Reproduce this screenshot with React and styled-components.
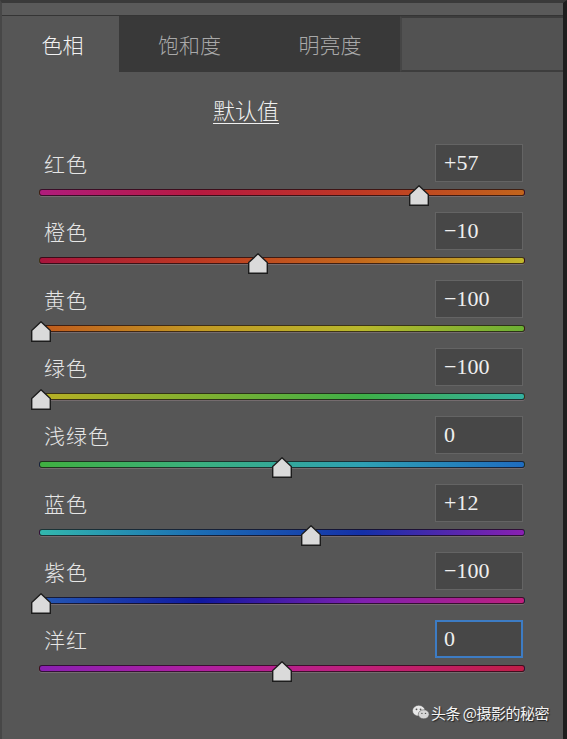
import React from 'react'
import styled, { createGlobalStyle } from 'styled-components'

const GlobalStyle = createGlobalStyle`
   html, body{
      margin: 0;
      padding: 0;
      background: #555555;
   }
`;

const CJK = `"Noto Sans CJK SC", "Noto Sans", sans-serif`;

const Frame = styled.div`
   width: 567px;
   height: 739px;
   box-sizing: border-box;
   overflow: hidden;
   background: #565656;
   border-top: 3px solid #3a3a3a;
   border-left: 2px solid #474747;
   border-right: 4px solid #1e1e1e;
   padding-left: 4px;
   display: flex;
   flex-direction: column;
   font-family: ${CJK};
   font-weight: 300;
`;

const TopStrip = styled.div`
   height: 12px;
   background: #5a5a5a;
   border-bottom: 1px solid #353535;
   margin-left: -4px;
`;

const TabBar = styled.div`
   display: flex;
   height: 56px;
`;

const Tab = styled.div`
   width: ${p => p.$w}px;
   display: flex;
   align-items: center;
   justify-content: center;
   font-size: 21px;
   color: ${p => p.$active ? '#f2f2f2' : '#a9a9a9'};
   background: ${p => p.$active ? '#565656' : '#393939'};
`;

const TabFiller = styled.div`
   flex: 1;
   background: #525252;
   border-top: 2px solid #3d3d3d;
   border-bottom: 2px solid #3d3d3d;
   border-left: 2px solid #464646;
`;

const DefaultRow = styled.div`
   height: 72px;
   box-sizing: border-box;
   padding: 25px 0 0 207px;

   span{
      font-size: 22px;
      line-height: 24px;
      color: #f0f0f0;
      text-decoration: underline;
      text-underline-offset: 4px;
      text-decoration-thickness: 1px;
   }
`;

const Rows = styled.ul`
   list-style: none;
   margin: 0 0 0 33px;
   padding: 0;
   width: 486px;
`;

const Row = styled.li`
   margin-bottom: 16px;
`;

const Header = styled.div`
   display: flex;
   align-items: center;
   justify-content: space-between;
   height: 38px;
`;

const Label = styled.span`
   padding-left: 5px;
   font-size: 21px;
   color: #e6e6e6;
   letter-spacing: 1px;
`;

const ValueBox = styled.div`
   width: 88px;
   height: 38px;
   margin-right: 2px;
   box-sizing: border-box;
   display: flex;
   align-items: center;
   padding-left: ${p => p.$focus ? 7 : 8}px;
   background: #474747;
   border: ${p => p.$focus ? '2px solid #3d7cc4' : '1px solid #646464'};
   font-family: "Liberation Serif", serif;
   font-weight: 400;
   font-size: 22px;
   color: #efefef;
`;

const Track = styled.div`
   position: relative;
   margin-top: 7px;
   height: 7px;
   box-sizing: border-box;
   border-radius: 3px;
   border: 1px solid rgba(20, 10, 15, 0.75);
   background: ${p => p.$gradient};
   box-shadow: 0 1px 0 rgba(210, 170, 185, 0.25);
`;

const Thumb = styled.svg`
   position: absolute;
   top: -5px;
   width: 20px;
   height: 21px;
`;

const Footer = styled.div`
   display: flex;
   justify-content: flex-end;
   align-items: center;
   gap: 1px;
   padding: 14px 14px 0 0;
   font-size: 15px;
   font-weight: 400;
   letter-spacing: -0.5px;
   color: #f4f4f4;
   text-shadow: 1px 1px 1px #222;
`;

const hues = [
   { name: '红色', value: 57, colors: ['#b01c7c', '#b81a40', '#bf3a24', '#c2641c'] },
   { name: '橙色', value: -10, colors: ['#a8143c', '#bd3a22', '#c46a1c', '#c2b82c'] },
   { name: '黄色', value: -100, colors: ['#c05a1c', '#c29a24', '#b8b82c', '#6cb034'] },
   { name: '绿色', value: -100, colors: ['#b8b024', '#80b030', '#3eb048', '#34b0a0'] },
   { name: '浅绿色', value: 0, colors: ['#40b040', '#3ab080', '#2ea0b4', '#1f6cc0'] },
   { name: '蓝色', value: 12, colors: ['#32b8ae', '#1c6cb4', '#1430a8', '#8a20b2'] },
   { name: '紫色', value: -100, colors: ['#2458b4', '#1018a0', '#8020b0', '#c0207e'] },
   { name: '洋红', value: 0, colors: ['#8a20b2', '#b020a0', '#c0207a', '#c01e48'], focus: true },
];

const format = (v) => v > 0 ? `+${v}` : v < 0 ? `\u2212${-v}` : '0';

const thumbLeft = (v) => 2 + (v + 100) / 200 * 482 - 10 - 1;

const WeChat = () => (
   <svg width="18" height="17" viewBox="0 0 20 18">
      <ellipse cx="7.5" cy="7" rx="7" ry="6" fill="#e8e8e8" stroke="#555" strokeWidth="0.6" />
      <ellipse cx="13" cy="11" rx="6" ry="5" fill="#d6d6d6" stroke="#555" strokeWidth="0.6" />
      <circle cx="5" cy="5.5" r="1" fill="#555" />
      <circle cx="9.5" cy="5.5" r="1" fill="#555" />
      <circle cx="11" cy="10" r="0.8" fill="#555" />
      <circle cx="15" cy="10" r="0.8" fill="#555" />
   </svg>
);

const App = () => {
   return (
      <>
         <GlobalStyle />
         <Frame>
            <TopStrip />
            <TabBar>
               <Tab $active $w={113}>色相</Tab>
               <Tab $w={141}>饱和度</Tab>
               <Tab $w={140}>明亮度</Tab>
               <TabFiller />
            </TabBar>
            <DefaultRow><span>默认值</span></DefaultRow>
            <Rows>
               {hues.map(h => (
                  <Row key={h.name}>
                     <Header>
                        <Label>{h.name}</Label>
                        <ValueBox $focus={h.focus}>{format(h.value)}</ValueBox>
                     </Header>
                     <Track $gradient={`linear-gradient(to right, ${h.colors.join(', ')})`}>
                        <Thumb viewBox="0 0 20 21" style={{ left: thumbLeft(h.value) }}>
                           <polygon points="10,0.8 19.3,9.5 19.3,20.3 0.7,20.3 0.7,9.5" fill="#dadada" stroke="#1c1c1c" strokeWidth="1.4" />
                        </Thumb>
                     </Track>
                  </Row>
               ))}
            </Rows>
            <Footer>
               <WeChat />
               <span>头条 @摄影的秘密</span>
            </Footer>
         </Frame>
      </>
   )
}

export default App
